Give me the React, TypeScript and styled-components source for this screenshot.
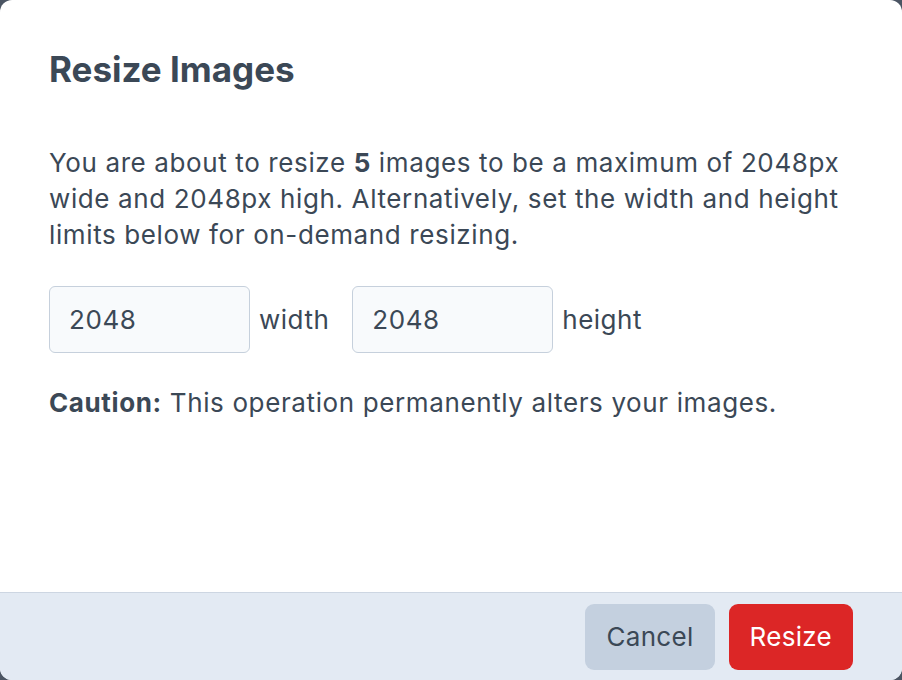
import React, { useState } from "react";
import styled, { createGlobalStyle } from "styled-components";

const GlobalStyle = createGlobalStyle`
    html, body {
        margin: 0;
        padding: 0;
        background: #4b5563;
    }

    * {
        box-sizing: border-box;
    }
`;

const Dialog = styled.div`
    width: 902px;
    height: 680px;
    background: #fff;
    border-radius: 12px;
    overflow: hidden;
    display: flex;
    flex-direction: column;
    font-family: Inter, "Noto Sans", sans-serif;
    color: #3b4856;
`;

const Body = styled.div`
    flex: 1;
    padding: 47px 40px 0 49px;
`;

const Title = styled.h2`
    margin: 0 0 54px;
    font-size: 35px;
    line-height: 44px;
    font-weight: 700;
`;

const Text = styled.p`
    margin: 0;
    font-size: 26px;
    line-height: 36px;
    letter-spacing: 0.62px;
`;

const SizeRow = styled.div`
    display: flex;
    align-items: center;
    margin: 33px 0 32px;
`;

const Field = styled.label`
    display: flex;
    align-items: center;
    gap: 9px;
    margin-right: 23px;
    font-size: 26px;
    letter-spacing: 0.5px;
`;

const Input = styled.input`
    width: 201px;
    height: 67px;
    padding: 0 19px;
    border: 1.5px solid #c6d0dc;
    border-radius: 6px;
    background: #f8fafc;
    font-family: inherit;
    font-size: 26px;
    letter-spacing: 0.6px;
    color: #3b4856;

    &:focus {
        outline: none;
        border-color: #94a3b8;
    }
`;

const Footer = styled.div`
    height: 88px;
    flex-shrink: 0;
    display: flex;
    justify-content: flex-end;
    align-items: center;
    gap: 14px;
    padding: 0 49px 0 0;
    background: #e3eaf3;
    border-top: 1.5px solid #cdd6e2;
`;

const Button = styled.button<{ $variant: "secondary" | "danger" }>`
    height: 66px;
    padding: 0 21px;
    border: none;
    border-radius: 9px;
    font-family: inherit;
    font-size: 26px;
    letter-spacing: 0.3px;
    cursor: pointer;
    background: ${(p) => (p.$variant === "danger" ? "#dc2626" : "#c4d0df")};
    color: ${(p) => (p.$variant === "danger" ? "#fff" : "#3b4856")};

    &:hover {
        filter: brightness(0.96);
    }
`;

const App: React.FC = () => {
    const [width, setWidth] = useState("2048");
    const [height, setHeight] = useState("2048");

    return (
        <>
            <GlobalStyle />
            <Dialog>
                <Body>
                    <Title>Resize Images</Title>
                    <Text>
                        You are about to resize <b>5</b> images to be a maximum of 2048px
                        wide and 2048px high. Alternatively, set the width and height
                        limits below for on-demand resizing.
                    </Text>
                    <SizeRow>
                        <Field>
                            <Input value={width} onChange={(e) => setWidth(e.target.value)} />
                            width
                        </Field>
                        <Field>
                            <Input value={height} onChange={(e) => setHeight(e.target.value)} />
                            height
                        </Field>
                    </SizeRow>
                    <Text>
                        <b>Caution:</b> This operation permanently alters your images.
                    </Text>
                </Body>
                <Footer>
                    <Button $variant="secondary">Cancel</Button>
                    <Button $variant="danger">Resize</Button>
                </Footer>
            </Dialog>
        </>
    );
};

export default App;
